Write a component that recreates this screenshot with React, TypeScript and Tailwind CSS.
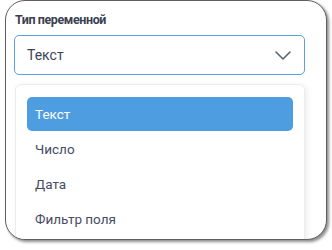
import { useState } from "react";

const options = ["Текст", "Число", "Дата", "Фильтр поля"];

export default function App() {
  const [selected, setSelected] = useState("Текст");

  return (
    <div className="w-[332px] h-[250px] bg-white font-['Roboto',sans-serif]">
      <div className="ml-[5px] w-[322px] h-[240px] bg-white border border-[#5f5f5f] rounded-[20px] shadow-[2px_2px_3px_rgba(0,0,0,0.45)] overflow-hidden px-[8px] pt-[10px]">
        {/* Label */}
        <label className="block ml-px text-[12.5px] leading-[18px] font-bold tracking-[-0.4px] text-[#3b3f4f]">
          Тип переменной
        </label>

        {/* Select */}
        <button className="mt-[6px] w-[291px] h-[40px] flex items-center justify-between pl-[12px] pr-[13px] border border-[#5aa0e3] rounded-[5px] bg-white text-[14px] text-[#3d4356]">
          <span>{selected}</span>
          <svg width="16" height="9" viewBox="0 0 16 9" fill="none">
            <path d="M1 1L8 8L15 1" stroke="#5b6176" strokeWidth="1.6" strokeLinecap="round" strokeLinejoin="round" />
          </svg>
        </button>

        {/* Options panel */}
        <div className="mt-[9px] ml-px w-[290px] h-[200px] bg-white border border-[#ececec] rounded-[6px] shadow-[2px_2px_6px_rgba(0,0,0,0.08)] px-[11px] pt-[12px]">
          {options.map((opt) => (
            <div
              key={opt}
              onClick={() => setSelected(opt)}
              className={
                opt === selected
                  ? "h-[34px] mb-px flex items-center px-[8px] rounded-[5px] bg-[#4f9de1] text-white text-[13.5px]"
                  : "h-[35px] flex items-center px-[8px] text-[13.5px] text-[#474c62]"
              }
            >
              {opt}
            </div>
          ))}
        </div>
      </div>
    </div>
  );
}
